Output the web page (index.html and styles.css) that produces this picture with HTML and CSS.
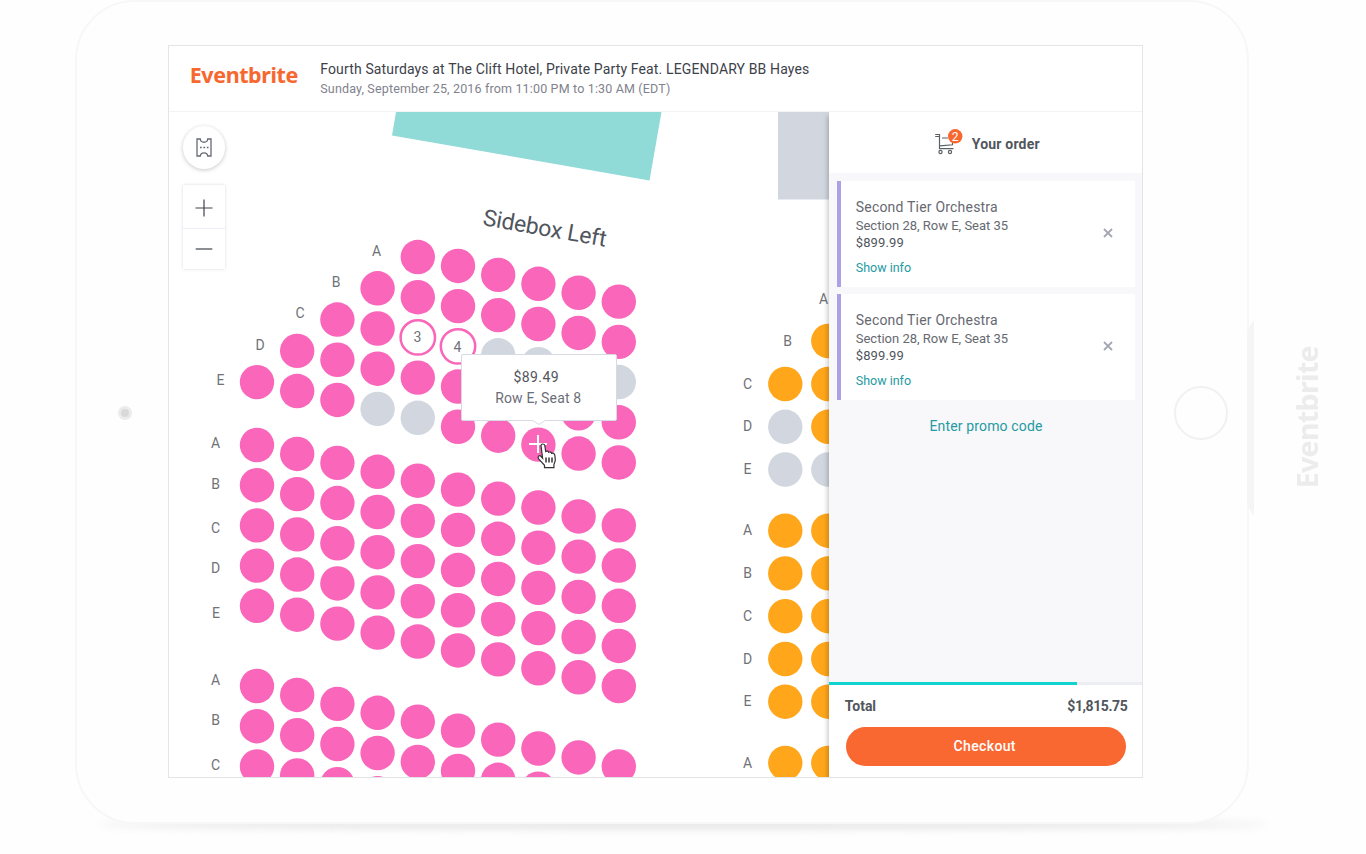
FILE: index.html
```html
<!DOCTYPE html>
<html lang="en">
<head>
<meta charset="utf-8">
<title>Eventbrite seat selection</title>
<link rel="stylesheet" href="styles.css">
</head>
<body>
<div class="stage">
  <div class="tablet">
    <div class="bezel"><span class="camera"></span></div>
    <div class="screen">
      <header class="header">
        <div class="logo">Eventbrite</div>
        <div class="event">
          <h1 class="event-title">Fourth Saturdays at The Clift Hotel, Private Party Feat. LEGENDARY BB Hayes</h1>
          <p class="event-date">Sunday, September 25, 2016 from 11:00 PM to 1:30 AM (EDT)</p>
        </div>
      </header>
      <div class="content">
        <div class="map">
          <svg class="seats" width="660" height="665" viewBox="169 112 660 665">
            <path class="stage-shape" d="M396 112 392 135.500 649.500 180.500 661.500 112Z"/>
            <path class="taken" d="M778 112h52v87.500h-52z"/>
            <text class="section-name" transform="translate(482 225) rotate(10)" textLength="125">Sidebox Left</text>
            <g id="seats"></g>
          </svg>
          <div class="tooltip">
            <div class="tooltip-price">$89.49</div>
            <div class="tooltip-seat">Row E, Seat 8</div>
            <svg class="tooltip-tip" width="14" height="6" viewBox="0 0 14 6"><path d="M0 0 7 4.500 14 0" fill="#fff" stroke="#d8dae3"/></svg>
          </div>
          <svg class="pointer" width="22" height="27" viewBox="0 0 22 27"><path d="M5 2.500c0-2 3.500-2 3.800 0l.9 6c1.500-.8 2.600-.4 3 .8 1.300-.6 2.500-.2 2.900 1 1.800-.4 3 .4 3.300 2.300l.4 4.500c0 2-1.400 3.300-1.400 5v2.500H8.500v-2.300L2.700 15.800c-1.700-2.300.7-4 2.400-2.300l1.500 1.700z" fill="#fff" stroke="#333" stroke-width="1.200"/><path d="M10 14.500v5M13 14.500v5M16 14.500v5" stroke="#333" stroke-width="1.500"/></svg>
          <div class="controls">
            <div class="round-button"><svg width="18" height="21" viewBox="0 0 18 21"><path d="M2 2h3.300c.3 4.300 7.100 4.300 7.400 0H16v17h-3.300c-.3-4.300-7.100-4.300-7.400 0H2z" fill="none" stroke="#666a73" stroke-width="1.300"/><path d="M5 10.500h9" stroke="#666a73" stroke-width="1.500" stroke-dasharray="1.700 1.700"/></svg></div>
            <div class="zoom-box">
              <div class="zoom-in"><svg width="18" height="18" viewBox="0 0 18 18"><path d="M.5 9h17M9 .5v17" stroke="#3f434b" stroke-width="1.200"/></svg></div>
              <div class="zoom-out"><svg width="18" height="18" viewBox="0 0 18 18"><path d="M.7 9h16.600" stroke="#3f434b" stroke-width="1.200"/></svg></div>
            </div>
          </div>
        </div>
        <aside class="order">
          <div class="order-head">
            <svg class="cart" width="30" height="28" viewBox="0 0 30 28"><g fill="none" stroke="#5c6067" stroke-width="1.200"><path d="M1.200 6.500h4.300v14.200h14M1.200 8.500h4.200M6 17.800l12.500-1V14M8 10h6"/><circle cx="6.500" cy="24" r="1.600" fill="#fff"/><circle cx="16" cy="24" r="1.600" fill="#fff"/></g><circle cx="21.200" cy="8.300" r="7.200" fill="#f6682f"/><text x="21.200" y="12.700" class="cart-count">2</text></svg>
            <h2 class="order-title">Your order</h2>
          </div>
          <div class="order-list">
            <div class="ticket">
              <div class="ticket-body">
                <div class="ticket-name">Second Tier Orchestra</div>
                <div class="ticket-seat">Section 28, Row E, Seat 35</div>
                <div class="ticket-price">$899.99</div>
                <a class="ticket-info">Show info</a>
              </div>
              <svg class="remove" width="10" height="10" viewBox="0 0 10 10"><path d="m1 1 8 8M9 1 1 9" stroke="#a5a8b2" stroke-width="1.800"/></svg>
            </div>
            <div class="ticket">
              <div class="ticket-body">
                <div class="ticket-name">Second Tier Orchestra</div>
                <div class="ticket-seat">Section 28, Row E, Seat 35</div>
                <div class="ticket-price">$899.99</div>
                <a class="ticket-info">Show info</a>
              </div>
              <svg class="remove" width="10" height="10" viewBox="0 0 10 10"><path d="m1 1 8 8M9 1 1 9" stroke="#a5a8b2" stroke-width="1.800"/></svg>
            </div>
            <a class="promo">Enter promo code</a>
          </div>
          <div class="progress"><div class="progress-bar"></div></div>
          <div class="checkout">
            <div class="total"><span>Total</span><span class="amount">$1,815.75</span></div>
            <button class="pay">Checkout</button>
          </div>
        </aside>
      </div>
    </div>
    <div class="bezel"><span class="home"></span></div>
  </div>
  <svg class="cover" width="7" height="196" viewBox="0 0 7 196"><path d="M7 0v196Q0 188 0 176V20Q0 8 7 0Z" fill="#f5f5f5"/></svg>
  <div class="side-logo">Eventbrite</div>
</div>
<div class="ground"></div>
<script src="script.js"></script>
</body>
</html>
```
FILE: styles.css
```css
* { box-sizing: border-box; }
body { margin: 0; height: 854px; overflow: hidden; background: #fefefe; font-family: Roboto, "Liberation Sans", sans-serif; color: #51555d; }
h1, h2, p { margin: 0; font-weight: 400; }
.stage { display: flex; align-items: center; height: 824px; padding-left: 74.500px; position: relative; z-index: 1; }
.tablet { display: flex; width: 1174px; height: 824px; border: 2px solid #f7f7f7; border-radius: 60px; background: #fefefe; padding-top: 43px; }
.bezel { width: 91.500px; height: 733px; display: flex; align-items: center; justify-content: center; padding-top: 3px; }
.bezel:last-child { width: 103.500px; padding-left: 13px; }
.camera { width: 14px; height: 14px; border-radius: 50%; background: #d9d9d9; border: 3px solid #ebebeb; margin-left: 5px; }
.home { width: 54px; height: 54px; border-radius: 50%; border: 2.500px solid #f1f1f1; flex: none; }
.screen { width: 975.500px; height: 733px; border: 1px solid #e4e4e5; background: #fff; overflow: hidden; flex: none; }
.header { height: 66px; border-bottom: 1px solid #f3f3f4; display: flex; padding-left: 21px; }
.logo { width: 130.500px; font: 700 21.500px/58px "Noto Sans", sans-serif; letter-spacing: -.42px; color: #f6682f; }
.event { padding-top: 13px; }
.event-title { font-size: 14px; line-height: 20px; letter-spacing: .14px; color: #3d414a; }
.event-date { font-size: 12.500px; line-height: 19px; letter-spacing: .162px; color: #7f828d; }
.content { display: flex; height: 665px; overflow: hidden; }
.map { width: 660px; position: relative; overflow: hidden; flex: none; }
.seats { display: block; }
.stage-shape { fill: #90dad8; }
.seat { fill: #f966ba; }
.gold { fill: #ffa61a; }
.taken { fill: #d1d6df; }
.picked { fill: #fff; stroke: #f966ba; stroke-width: 2.500; }
.seats text { font-size: 14px; fill: #6f7277; text-anchor: middle; }
.seats .section-name { font-size: 23px; fill: #51555d; text-anchor: start; }
.plus { stroke: #fff; stroke-width: 2; }
.tooltip { position: absolute; left: 292px; top: 242px; width: 156px; height: 67px; background: #fff; border: 1px solid #d8dae3; border-radius: 2px; padding: 12px 1px 0 0; text-align: center; font-size: 14px; line-height: 21px; letter-spacing: .16px; color: #6b6e78; }
.tooltip-price { color: #51555d; letter-spacing: .39px; margin-right: 4px; line-height: 21px; }
.tooltip-tip { position: absolute; left: 70px; top: 64.500px; }
.pointer { position: absolute; left: 367.500px; top: 330.500px; }
.controls { position: absolute; left: 14px; top: 14px; width: 42.500px; }
.round-button { height: 42.500px; border-radius: 50%; background: #fff; box-shadow: 0 1px 4px rgba(0,0,0,.22); display: flex; align-items: center; justify-content: center; }
.zoom-box { margin-top: 16.500px; box-shadow: 0 0 3px rgba(40,40,80,.17); background: #fff; }
.zoom-in, .zoom-out { display: flex; align-items: center; justify-content: center; }
.zoom-in { height: 44px; padding-top: 2px; border-bottom: 1px solid #eeeef6; }
.zoom-out { height: 40px; padding-bottom: 1px; }
.order { flex: 1; background: #f8f8fa; display: flex; flex-direction: column; position: relative; box-shadow: -1px 4px 5px rgba(0,0,0,.25); }
.order-head { height: 61px; background: #fff; display: flex; align-items: center; padding: 3px 0 0 105px; }
.order-title { font-size: 14px; font-weight: 700; letter-spacing: .2px; margin-left: 8px; }
.cart { margin-top: -5px; }
.cart-count { font-size: 12px; fill: #fff; text-anchor: middle; }
.order-list { flex: 1; padding: 8px 7px 0 8px; display: flex; flex-direction: column; gap: 7.500px; }
.ticket { height: 105.800px; background: #fff; border-left: 4px solid #aca0e8; display: flex; align-items: center; justify-content: space-between; padding: 0 22px 1.500px 15px; }
.ticket-body { height: 72px; padding-top: 1px; white-space: nowrap; }
.ticket-name { font-size: 14px; line-height: 19px; letter-spacing: .2px; color: #666970; }
.ticket-seat { font-size: 13px; line-height: 17px; color: #666970; }
.ticket-price { font-size: 13px; line-height: 17px; letter-spacing: .12px; }
.ticket-info { display: block; font-size: 12.500px; line-height: 17px; margin-top: 8px; color: #259aa3; }
.promo { text-align: center; margin-top: 9px; font-size: 14px; line-height: 18px; letter-spacing: .15px; color: #259aa3; }
.progress { height: 3px; background: #eceef2; }
.progress-bar { width: 248px; height: 3px; background: #11d3d0; }
.checkout { background: #fff; height: 92px; padding: 12px 15px 0 16px; }
.total { display: flex; justify-content: space-between; font-size: 14px; line-height: 19px; font-weight: 700; }
.amount { letter-spacing: -.42px; }
.pay { display: block; margin: 11px 0 0 1px; padding: 0 2px 1px 0; width: 280px; height: 38.500px; border: 0; border-radius: 20px; background: #f96830; color: #fff; font: 500 14px Roboto, sans-serif; letter-spacing: .36px; }
.cover { margin-left: -2px; margin-top: 12px; }
.side-logo { writing-mode: vertical-rl; transform: rotate(180deg); font: 700 28.500px/40px "Noto Sans", sans-serif; letter-spacing: -.65px; color: #ececec; margin: 10px 0 0 33px; }
.ground { margin: -3px auto 0; width: 1170px; height: 7px; background: #dedede; filter: blur(4px); border-radius: 50%; }
```
FILE: script.js
```javascript
const layer = document.getElementById("seats");
const ns = "http://www.w3.org/2000/svg";
const add = (tag, attrs, text) => {
  const el = document.createElementNS(ns, tag);
  for (const key in attrs) el.setAttribute(key, attrs[key]);
  if (text) el.textContent = text;
  layer.append(el);
};
const label = (x, y, text) => add("text", { x, y: y + 4.6 }, text);
const seat = (cx, cy, kind) => add("circle", { cx, cy, r: 17.2, class: kind });

// Pink blocks slope down to the right by `slope` per seat.
const pitch = 40.2, slope = 8.93;
const block = (top, rows, firstSeat, special) => {
  for (let r = 0; r < rows; r++)
    for (let c = firstSeat(r); c < 10; c++)
      seat(257 + c * pitch, top + r * pitch + c * slope, special[r + "-" + c] || "seat");
};
block(221.3, 5, r => 4 - r, { "2-4": "picked", "2-5": "picked", "2-6": "taken", "2-7": "taken", "2-9": "taken", "4-3": "taken", "4-4": "taken" });
block(445, 5, () => 0, {});
block(686, 3, () => 0, {});
label(417.5, 337, "3");
label(457.5, 347, "4");
add("path", { class: "plus", d: "M529 444h18M538 435v18" });

[[376.500, 251, "A"], [336, 282, "B"], [300, 313, "C"], [260, 345, "D"], [220.500, 380, "E"],
 [215.500, 443, "A"], [215.500, 484, "B"], [215.500, 528, "C"], [215.500, 568, "D"], [216, 613, "E"],
 [215.500, 680, "A"], [215.500, 720, "B"], [215.500, 765, "C"],
 [823.500, 299, "A"], [787.500, 341, "B"]].forEach(l => label(...l));

// Straight orange block, partly covered by the order panel.
seat(828.3, 341, "gold");
[[384, "C"], [426.800, "D"], [469.500, "E"], [530.700, "A"], [573.400, "B"], [616.200, "C"], [659, "D"], [701.700, "E"], [763, "A"]].forEach(([y, row], i) => {
  label(747.5, y, row);
  seat(785.3, y, i === 1 || i === 2 ? "taken" : "gold");
  seat(828.3, y, i === 2 ? "taken" : "gold");
});
```
